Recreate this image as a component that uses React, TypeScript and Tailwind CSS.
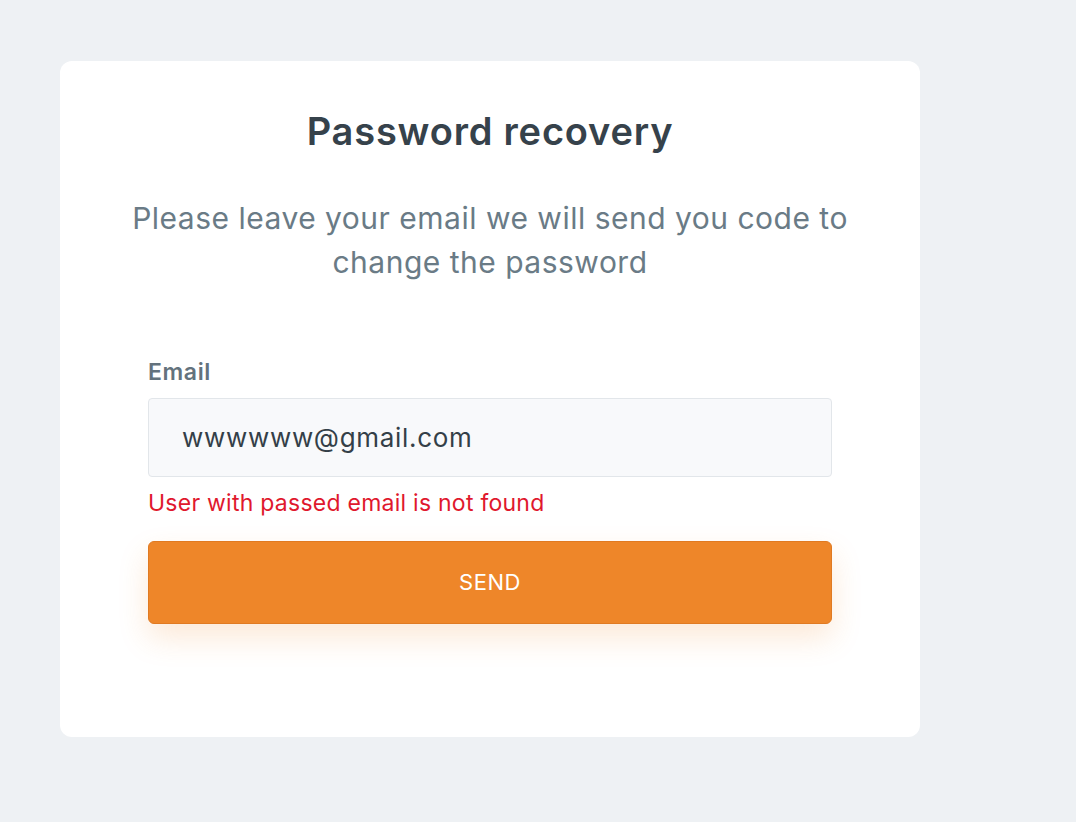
import React from "react";

export default function App() {
  return (
    <div
      className="min-h-[822px] w-full bg-[#eef1f4] pt-[61px] pl-[60px]"
      style={{ fontFamily: 'Inter, "Noto Sans", sans-serif' }}
    >
      <div className="w-[860px] h-[676px] bg-white rounded-[12px] px-[88px] pt-[45px]">
        <h1 className="text-center text-[38px] leading-[50px] font-semibold tracking-[0.8px] text-[#36424b]">
          Password recovery
        </h1>
        <p className="mt-[40px] -mx-[40px] text-center text-[30px] leading-[44px] tracking-[0.5px] text-[#6a7b86]">
          Please leave your email we will send you code to change the password
        </p>
        <div className="mt-[73px]">
          <label className="block text-[23px] leading-[30px] font-semibold tracking-[0.6px] text-[#63727d]">
            Email
          </label>
          <div className="mt-[11px] h-[79px] w-full rounded-[4px] border border-[#e2e6ea] bg-[#f8f9fb] flex items-center px-[33px] text-[26px] tracking-[0.7px] text-[#343f48]">
            wwwwww@gmail.com
          </div>
          <div className="mt-[11px] text-[23px] leading-[30px] tracking-[0.25px] text-[#e0182d]">
            User with passed email is not found
          </div>
          <button className="mt-[23px] h-[83px] w-full rounded-[6px] bg-[#ee8629] border border-[#e07a22] text-white text-[22px] tracking-[0.5px] shadow-[0_14px_30px_rgba(238,134,41,0.18)]">
            SEND
          </button>
        </div>
      </div>
    </div>
  );
}
